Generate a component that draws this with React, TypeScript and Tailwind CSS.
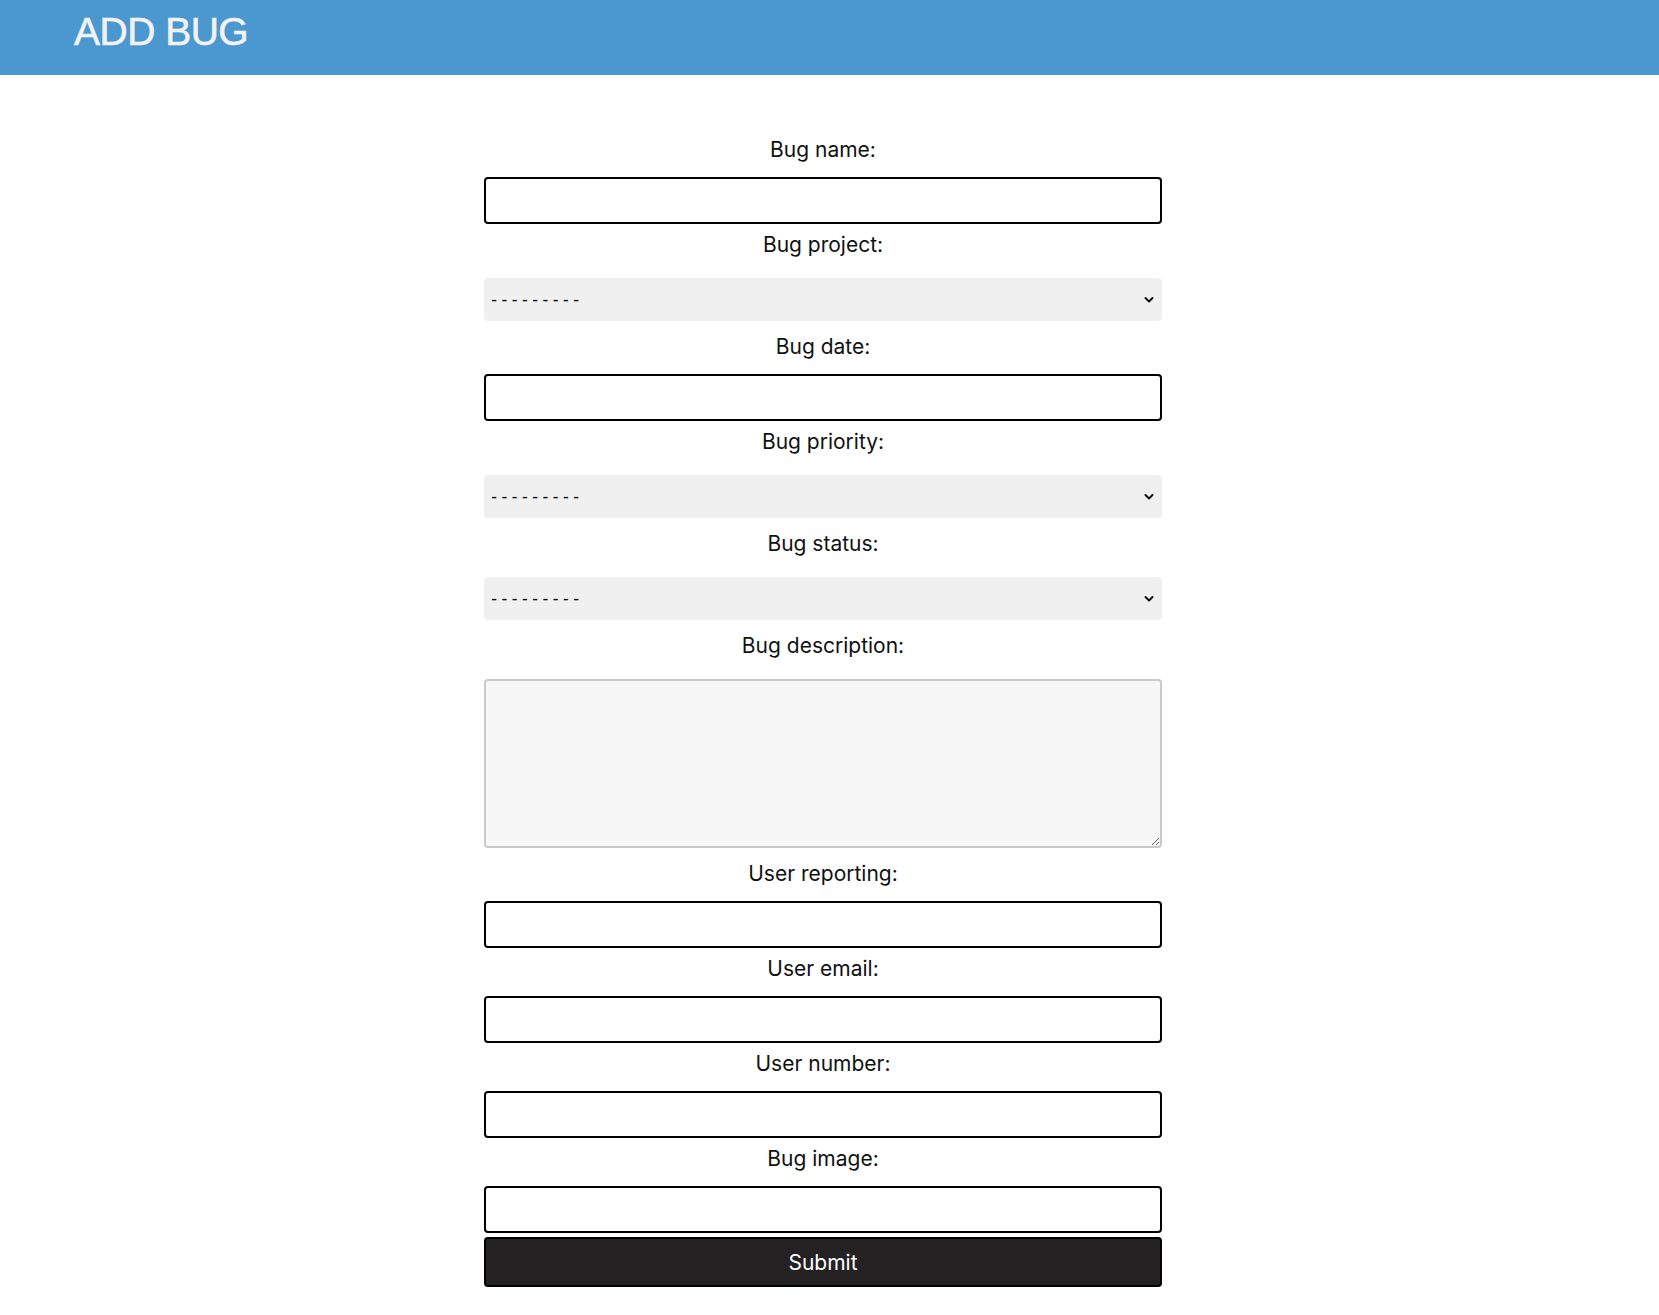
import React from 'react';

type FieldKind = 'input' | 'select' | 'textarea';

interface Field {
  label: string;
  kind: FieldKind;
}

const FIELDS: Field[] = [
  { label: 'Bug name:', kind: 'input' },
  { label: 'Bug project:', kind: 'select' },
  { label: 'Bug date:', kind: 'input' },
  { label: 'Bug priority:', kind: 'select' },
  { label: 'Bug status:', kind: 'select' },
  { label: 'Bug description:', kind: 'textarea' },
  { label: 'User reporting:', kind: 'input' },
  { label: 'User email:', kind: 'input' },
  { label: 'User number:', kind: 'input' },
  { label: 'Bug image:', kind: 'input' },
];

const Chevron = () => (
  <svg width="10" height="7" viewBox="0 0 10 7" fill="none" className="pointer-events-none absolute right-[8px] top-1/2 -translate-y-1/2">
    <path d="M1.5 1.5 L5 5 L8.5 1.5" stroke="#111" strokeWidth="2" strokeLinecap="round" strokeLinejoin="round" />
  </svg>
);

const Control = ({ kind, id }: { kind: FieldKind; id: string }) => {
  if (kind === 'select') {
    return (
      <div className="relative mt-[6px] mb-[5px]">
        <select
          id={id}
          defaultValue=""
          className="block h-[43px] w-full appearance-none rounded-[4px] bg-[#f0f0f0] pl-[5px] text-[17px] text-[#111] outline-none [font-family:'DejaVu_Sans_Mono',monospace]"
        >
          <option value="">---------</option>
        </select>
        <Chevron />
      </div>
    );
  }

  if (kind === 'textarea') {
    return (
      <textarea
        id={id}
        className="mt-[6px] mb-[5px] block h-[169px] w-full rounded-[4px] border-2 border-[#c9c9c9] bg-[#f7f7f7] outline-none"
      />
    );
  }

  return (
    <input
      id={id}
      type="text"
      className="block h-[47px] w-full rounded-[4px] border-2 border-black bg-white outline-none"
    />
  );
};

export default function App() {
  return (
    <div className="min-h-screen bg-white [font-family:Inter,'Noto_Sans',sans-serif]">
      {/* ヘッダー */}
      <header className="h-[75px] bg-[#4b97cf] pl-[74px]">
        <h1 className="pt-[9px] text-[39px] leading-[46px] tracking-[-0.5px] text-[#f2f2f2] [font-family:'Liberation_Sans',Arial,sans-serif] [-webkit-text-stroke:0.6px_#f2f2f2]">
          ADD BUG
        </h1>
      </header>

      {/* フォーム */}
      <div className="flex justify-center pr-[13px] pt-[54px] pb-[30px]">
        <form className="w-[678px]" onSubmit={(e) => e.preventDefault()}>
          {FIELDS.map((field, i) => (
            <div key={field.label}>
              <label
                htmlFor={`field-${i}`}
                className="block pt-[6px] pb-[12px] text-center text-[21px] leading-[30px] text-[#111]"
              >
                {field.label}
              </label>
              <Control kind={field.kind} id={`field-${i}`} />
            </div>
          ))}

          <button
            type="submit"
            className="mt-[4px] block h-[50px] w-full rounded-[4px] border-2 border-black bg-[#232122] pt-[2px] text-[21px] text-white"
          >
            Submit
          </button>
        </form>
      </div>
    </div>
  );
}
